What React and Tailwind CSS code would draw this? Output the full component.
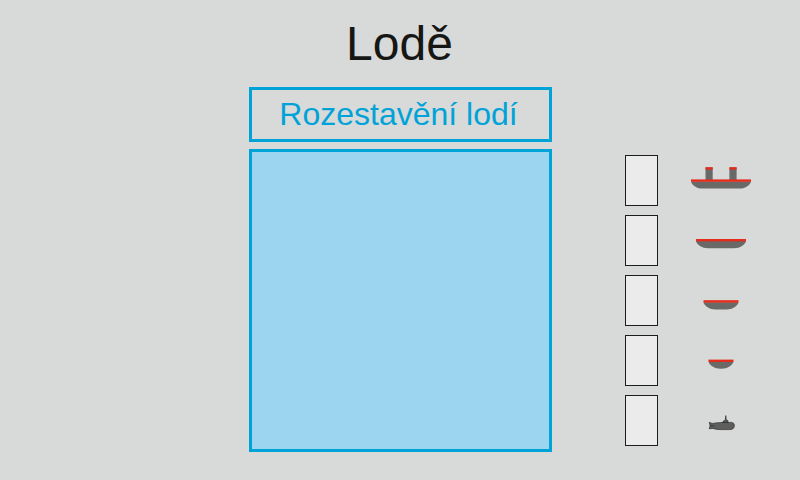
import React from "react";

function Hull({ x, y, width }) {
  const right = x + width;
  return (
    <g>
      <path
        fill="#696968"
        d={`M${x} ${y + 2}H${right}C${right - 1} ${y + 6} ${right - 6} ${y + 9.2} ${right - 12} ${y + 9.2}H${x + 12}C${x + 6} ${y + 9.2} ${x + 1} ${y + 6} ${x} ${y + 2}Z`}
      />
      <rect x={x} y={y} width={width} height="2.4" fill="#e42b1c" />
    </g>
  );
}

function Funnel({ x }) {
  return (
    <g>
      <rect x={x} y="12.5" width="7.2" height="13" fill="#696968" />
      <rect x={x} y="12.2" width="7.2" height="2.4" fill="#e42b1c" />
    </g>
  );
}

function Submarine() {
  return (
    <g stroke="#1d1d1b" strokeWidth="0.6" strokeLinejoin="round" fill="#5e5e5d">
      <path d="M31.4 28L32.4 26L34.4 24.8L34.8 20.6L35.2 24.8L36.8 25.6L37.2 28Z" />
      <path d="M18.2 27.4L21.6 28.4C25 27.6 31 27.4 35 27.4H40.5C43 27.6 43.5 29.2 43.3 31.2C43.1 33.6 41.4 34.5 38.5 34.6H29C26 34.5 24 34 21.8 33.4L18.2 33.8L19.2 30.8Z" />
      <path d="M18.6 30.8H23.5" fill="none" />
    </g>
  );
}

const ships = [
  {
    name: "Letadlová loď",
    drawing: (
      <>
        <Funnel x={14.5} />
        <Funnel x={38.4} />
        <Hull x={0} y={24.4} width={60} />
      </>
    ),
  },
  { name: "Bitevní loď", drawing: <Hull x={5} y={24} width={50} /> },
  { name: "Křižník", drawing: <Hull x={12.5} y={25.2} width={35} /> },
  { name: "Torpédoborec", drawing: <Hull x={17.5} y={24.6} width={25} /> },
  { name: "Ponorka", drawing: <Submarine /> },
];

function ShipRow({ id, name, drawing }) {
  return (
    <li className="flex items-center gap-[33px]">
      <input
        id={id}
        type="text"
        inputMode="numeric"
        className="h-[51px] w-[33px] border border-[#1d1d1b] bg-[#ebebeb] text-center text-2xl outline-none"
      />
      <label htmlFor={id} aria-label={name}>
        <svg className="block h-[51px] w-[60px]" viewBox="0 0 60 51" aria-hidden="true">
          {drawing}
        </svg>
      </label>
    </li>
  );
}

export default function App() {
  return (
    <main className="min-h-screen bg-[#d8dad9] pt-4 pb-7 pl-px font-['Liberation_Sans',Arial,sans-serif]">
      <h1 className="pr-0.5 text-center text-[48px] leading-[56px] text-[#161615]">Lodě</h1>
      <div className="mt-[15px] grid grid-cols-[1fr_303px_1fr]">
        <h2 className="col-start-2 border-3 border-[#00a3d8] pr-1 text-center text-[32px] leading-[49px] text-[#00a3d8]">
          Rozestavění lodí
        </h2>
        <div className="col-start-2 mt-[7px] aspect-square border-3 border-[#00a3d8] bg-[#9bd5f0]" />
        <ul className="col-start-3 mt-[13px] flex flex-col gap-[9px] pl-[73px]">
          {ships.map((ship, index) => (
            <ShipRow key={ship.name} id={`ship-${index}`} name={ship.name} drawing={ship.drawing} />
          ))}
        </ul>
      </div>
    </main>
  );
}
